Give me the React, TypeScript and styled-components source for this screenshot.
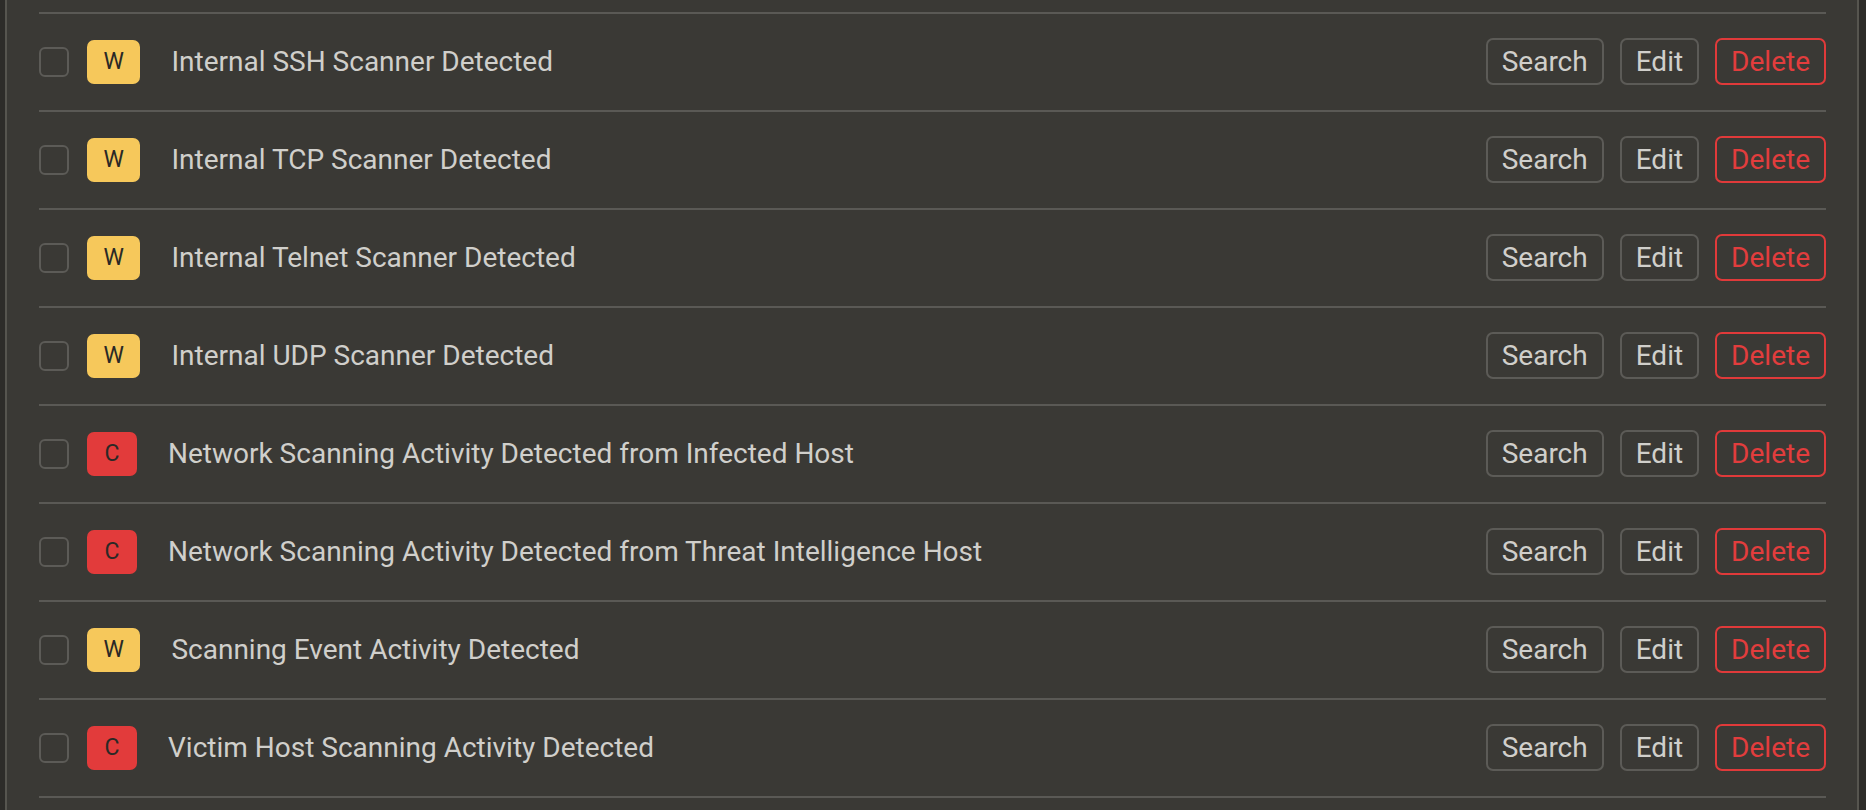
import React, { useState } from 'react';
import styled, { createGlobalStyle } from 'styled-components';

const GlobalStyle = createGlobalStyle`
  html, body {
    margin: 0;
    padding: 0;
    background: #2d2c29;
    font-family: Roboto, "Liberation Sans", Arial, sans-serif;
  }
  * { box-sizing: border-box; }
`;

type Severity = 'warning' | 'critical';

interface Rule {
  id: number;
  name: string;
  severity: Severity;
}

const rules: Rule[] = [
  { id: 1, name: 'Internal SSH Scanner Detected', severity: 'warning' },
  { id: 2, name: 'Internal TCP Scanner Detected', severity: 'warning' },
  { id: 3, name: 'Internal Telnet Scanner Detected', severity: 'warning' },
  { id: 4, name: 'Internal UDP Scanner Detected', severity: 'warning' },
  { id: 5, name: 'Network Scanning Activity Detected from Infected Host', severity: 'critical' },
  { id: 6, name: 'Network Scanning Activity Detected from Threat Intelligence Host', severity: 'critical' },
  { id: 7, name: 'Scanning Event Activity Detected', severity: 'warning' },
  { id: 8, name: 'Victim Host Scanning Activity Detected', severity: 'critical' },
];

const Page = styled.div`
  height: 810px;
  overflow: hidden;
  padding-left: 5px;
  padding-right: 7px;
`;

const Panel = styled.div`
  height: 100%;
  background: #3a3935;
  border-left: 2px solid #56554f;
  border-right: 2px solid #56554f;
  padding: 12px 31px 0 32px;
`;

const List = styled.ul`
  list-style: none;
  margin: 0;
  padding: 0;
  border-bottom: 2px solid #5a5955;
`;

const Row = styled.li`
  display: flex;
  align-items: center;
  height: 98px;
  padding-bottom: 1px;
  border-top: 2px solid #5a5955;
`;

const Checkbox = styled.span<{ checked: boolean }>`
  width: 30px;
  height: 30px;
  flex: none;
  border: 2px solid #5c5b57;
  border-radius: 6px;
  background: ${p => (p.checked ? '#5c5b57' : 'transparent')};
  cursor: pointer;
  margin-right: 18px;
`;

const Badge = styled.span<{ severity: Severity }>`
  display: inline-flex;
  align-items: center;
  justify-content: center;
  flex: none;
  height: 44px;
  min-width: 50px;
  padding: 0 16.5px;
  border-radius: 7px;
  font-size: 23px;
  color: #2a2926;
  background: ${p => (p.severity === 'critical' ? '#e23b3b' : '#f6c85b')};
  margin-right: 31px;
`;

const Name = styled.span`
  flex: 1;
  font-size: 28px;
  color: #d0cfcb;
  white-space: nowrap;
`;

const Actions = styled.div`
  display: flex;
  gap: 16px;
`;

const Button = styled.button<{ danger?: boolean }>`
  height: 47px;
  padding: 0 14px;
  background: transparent;
  border: 2px solid ${p => (p.danger ? '#e03a3a' : '#5c5b57')};
  border-radius: 7px;
  font-family: inherit;
  font-size: 28px;
  color: ${p => (p.danger ? '#e23d3d' : '#d0cfcb')};
  cursor: pointer;
`;

export default function App() {
  const [checked, setChecked] = useState<Record<number, boolean>>({});
  const [items, setItems] = useState(rules);

  return (
    <>
      <GlobalStyle />
      <Page>
        <Panel>
          <List>
            {items.map(rule => (
              <Row key={rule.id}>
                <Checkbox
                  checked={!!checked[rule.id]}
                  onClick={() => setChecked(c => ({ ...c, [rule.id]: !c[rule.id] }))}
                />
                <Badge severity={rule.severity}>{rule.severity === 'critical' ? 'C' : 'W'}</Badge>
                <Name>{rule.name}</Name>
                <Actions>
                  <Button>Search</Button>
                  <Button>Edit</Button>
                  <Button danger onClick={() => setItems(list => list.filter(r => r.id !== rule.id))}>
                    Delete
                  </Button>
                </Actions>
              </Row>
            ))}
          </List>
        </Panel>
      </Page>
    </>
  );
}
